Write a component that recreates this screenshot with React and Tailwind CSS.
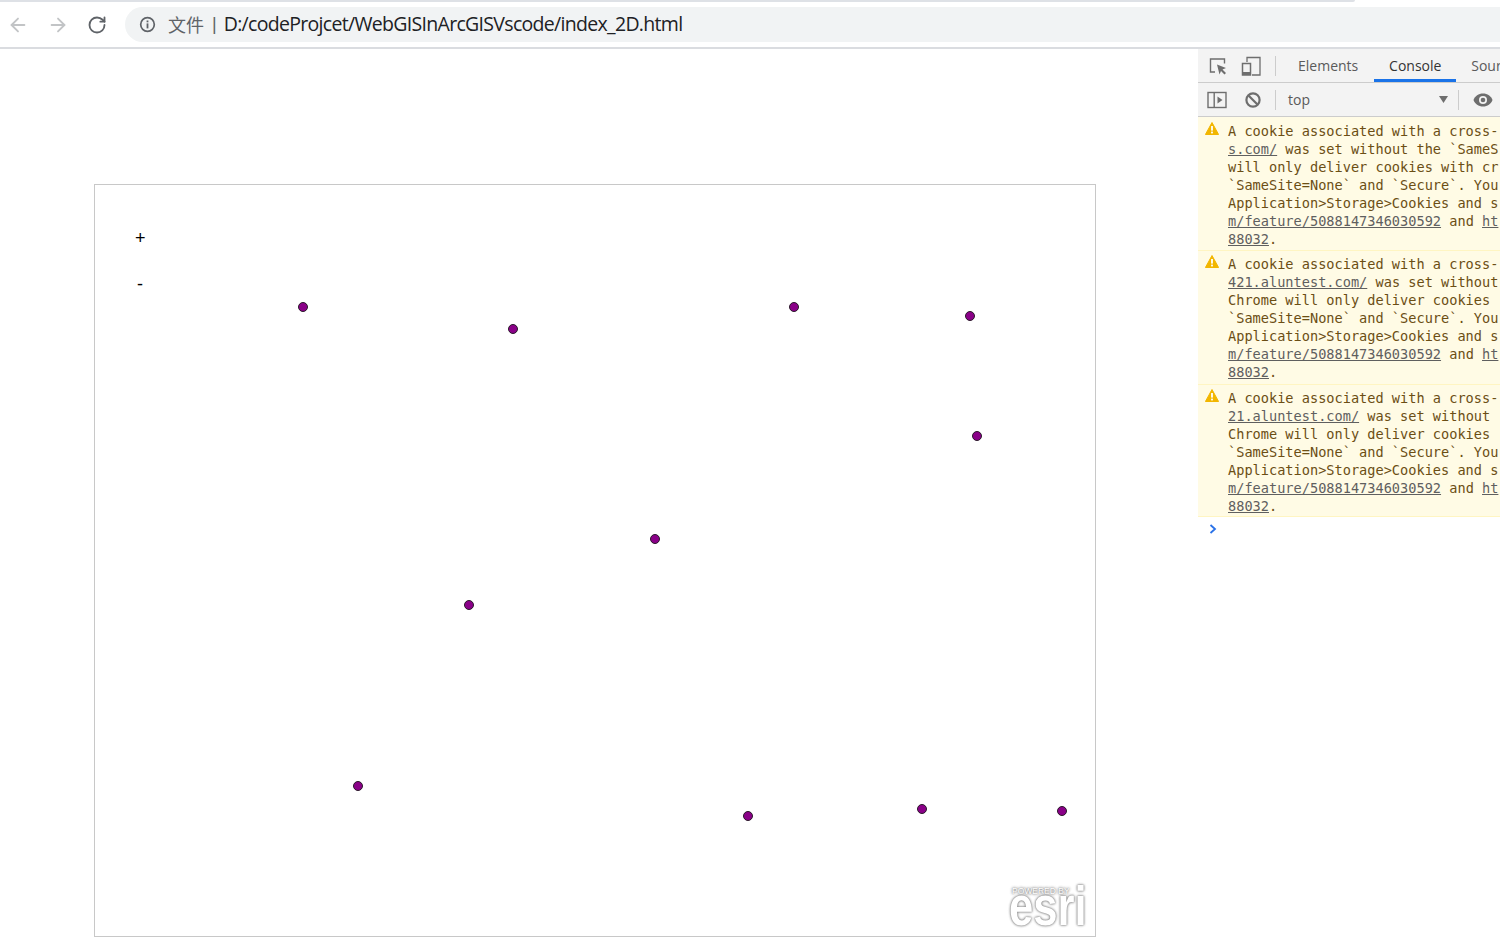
import { ArrowLeft, ArrowRight, RotateCw } from "lucide-react"

const POINTS = [
  [303, 307], [513, 329], [794, 307], [970, 316], [977, 436], [655, 539],
  [469, 605], [358, 786], [748, 816], [922, 809], [1062, 811],
]

const MESSAGES = [
  [
    "A cookie associated with a cross-",
    [<u key="a">s.com/</u>, " was set without the `SameS"],
    "will only deliver cookies with cr",
    "`SameSite=None` and `Secure`. You",
    "Application>Storage>Cookies and s",
    [<u key="a">m/feature/5088147346030592</u>, " and ", <u key="b">ht</u>],
    [<u key="a">88032</u>, "."],
  ],
  [
    "A cookie associated with a cross-",
    [<u key="a">421.aluntest.com/</u>, " was set without"],
    "Chrome will only deliver cookies ",
    "`SameSite=None` and `Secure`. You",
    "Application>Storage>Cookies and s",
    [<u key="a">m/feature/5088147346030592</u>, " and ", <u key="b">ht</u>],
    [<u key="a">88032</u>, "."],
  ],
  [
    "A cookie associated with a cross-",
    [<u key="a">21.aluntest.com/</u>, " was set without"],
    "Chrome will only deliver cookies ",
    "`SameSite=None` and `Secure`. You",
    "Application>Storage>Cookies and s",
    [<u key="a">m/feature/5088147346030592</u>, " and ", <u key="b">ht</u>],
    [<u key="a">88032</u>, "."],
  ],
]

const ROW_PADDING = ["pt-[5px] pb-[2px]", "pt-[4px] pb-[3px]", "pt-[4px] pb-[1px]"]

const WarningIcon = () => (
  <svg width="14" height="13" viewBox="0 0 14 13" className="shrink-0">
    <path d="M7 .5 13.6 12.5H.4Z" fill="#f2b600" stroke="#f2b600" strokeLinejoin="round" />
    <rect x="6.1" y="4" width="1.8" height="4.6" fill="#fff" />
    <rect x="6.1" y="9.6" width="1.8" height="1.8" fill="#fff" />
  </svg>
)

const AddressBar = () => (
  <div className="h-[49px] bg-white border-b-2 border-[#dadce0] flex flex-col">
    <div className="h-[2px] w-[1355px] bg-[#dee1e6] rounded-br-sm" />
    <div className="flex items-center mt-[5px]">
      <div className="w-[125px] flex items-center pl-[7px] gap-[18px]">
        <ArrowLeft size={22} strokeWidth={2} className="text-[#c2c4c6]" />
        <ArrowRight size={22} strokeWidth={2} className="text-[#c2c4c6]" />
        <RotateCw size={20} strokeWidth={2.2} className="text-[#5f6368]" />
      </div>
      <div className="flex-1 h-[35px] bg-[#f1f3f4] rounded-l-full flex items-center pl-[14px]">
        <svg width="17" height="17" viewBox="0 0 17 17" className="shrink-0">
          <circle cx="8.5" cy="8.5" r="6.8" fill="none" stroke="#5f6368" strokeWidth="1.7" />
          <rect x="7.6" y="7.4" width="1.8" height="5" fill="#5f6368" />
          <rect x="7.6" y="4.5" width="1.8" height="1.8" fill="#5f6368" />
        </svg>
        <span className="ml-[12px] text-[18px] text-[#5f6368] font-['Noto_Sans_CJK_SC',sans-serif] -mt-[1px]">文件</span>
        <span className="ml-[8px] text-[18px] text-[#5f6368] font-['Liberation_Sans',sans-serif] -mt-[1px]">|</span>
        <span className="ml-[7px] text-[19.5px] tracking-[-0.69px] text-[#202124] font-['Open_Sans',sans-serif] whitespace-nowrap -mt-[2px]">
          D:/codeProjcet/WebGISInArcGISVscode/index_2D.html
        </span>
      </div>
    </div>
  </div>
)

const MapPanel = () => (
  <div className="relative w-[1002px] h-[753px] border border-[#c8c8c8] bg-white overflow-hidden">
    <span className="absolute left-[40px] top-[43px] text-[18px] leading-5 text-black font-['Liberation_Sans',sans-serif]">+</span>
    <span className="absolute left-[42px] top-[89px] text-[18px] leading-5 text-black font-['Liberation_Sans',sans-serif]">-</span>
    {POINTS.map(([x, y]) => (
      <span
        key={x + "-" + y}
        className="absolute w-[10px] h-[10px] rounded-full bg-[#8a0088] border-[1.5px] border-[#2a1a2a]"
        style={{ left: x - 100, top: y - 190 }}
      />
    ))}
    <div className="absolute right-[8px] bottom-[9px] w-[78px] h-[45px] text-white font-['Liberation_Sans',sans-serif] [text-shadow:0_0_3px_#8a8a8a,0_0_3px_#8a8a8a,0_0_1px_#b0b0b0]">
      <div className="text-[8.5px] leading-[10px] whitespace-nowrap pl-[3px] pt-[4px]">POWERED BY</div>
      <div className="absolute left-0 top-[9px] text-[56px] leading-[30px] font-bold whitespace-nowrap origin-left scale-x-[0.78]">esri</div>
    </div>
  </div>
)

const DevTools = () => (
  <div className="w-[302px] bg-white overflow-hidden">
    <div className="h-[34px] bg-[#f3f3f3] border-b border-[#cccccc] flex items-stretch text-[14px] text-[#5a5a5a] font-['Open_Sans',sans-serif]">
      <div className="w-[77px] flex items-center pl-[11px] gap-[14px] shrink-0">
        <svg width="18" height="18" viewBox="0 0 18 18" fill="none">
          <path d="M6 15H1.5V2H15.5V6.5" stroke="#6e6e6e" strokeWidth="1.4" />
          <path d="M8 7.5 17 11 13.5 12.5 17 16 15.5 17.5 12 14 10.5 17.5Z" fill="#6e6e6e" />
        </svg>
        <svg width="20" height="20" viewBox="0 0 20 20" fill="none">
          <path d="M6 6V1.5H19V19H11" stroke="#6e6e6e" strokeWidth="1.3" />
          <rect x="1.5" y="7.5" width="8" height="11.5" stroke="#6e6e6e" strokeWidth="1.5" />
          <rect x="2" y="16" width="7" height="3" fill="#6e6e6e" />
        </svg>
      </div>
      <div className="w-px h-[20px] bg-[#cccccc] self-center shrink-0" />
      <span className="ml-[22px] self-center whitespace-nowrap">Elements</span>
      <div className="ml-[16px] w-[82px] flex items-center justify-center border-b-[3px] border-[#1a73e8] text-[#333333] shrink-0 pt-[2px]">Console</div>
      <span className="ml-[15px] self-center whitespace-nowrap">Sour</span>
    </div>
    <div className="h-[34px] bg-[#f3f3f3] border-b border-[#cccccc] flex items-center text-[14px] text-[#5a5a5a] font-['Open_Sans',sans-serif]">
      <svg width="20" height="18" viewBox="0 0 20 18" fill="none" className="ml-[9px] shrink-0">
        <rect x="1" y="1.5" width="18" height="15" stroke="#6e6e6e" strokeWidth="1.4" />
        <rect x="6.5" y="1.5" width="1.4" height="15" fill="#6e6e6e" />
        <path d="M10.5 5.5 15.5 9 10.5 12.5Z" fill="#6e6e6e" />
      </svg>
      <svg width="18" height="18" viewBox="0 0 18 18" fill="none" className="ml-[17px] shrink-0">
        <circle cx="9" cy="9" r="6.6" stroke="#6e6e6e" strokeWidth="2.2" />
        <path d="M4.5 4.5 13.5 13.5" stroke="#6e6e6e" strokeWidth="2.2" />
      </svg>
      <div className="ml-[13px] w-px h-[20px] bg-[#cccccc] shrink-0" />
      <span className="ml-[12px] w-[151px] shrink-0">top</span>
      <svg width="9" height="7" viewBox="0 0 9 7" className="shrink-0">
        <path d="M0 0H9L4.5 7Z" fill="#6e6e6e" />
      </svg>
      <div className="ml-[10px] w-px h-[20px] bg-[#cccccc] shrink-0" />
      <svg width="20" height="14" viewBox="0 0 20 14" className="ml-[14px] shrink-0">
        <path d="M10 .5C5.5.5 2 3 .5 7 2 11 5.5 13.5 10 13.5S18 11 19.5 7C18 3 14.5.5 10 .5Z" fill="#6e6e6e" />
        <circle cx="10" cy="7" r="4" fill="#f3f3f3" />
        <circle cx="10" cy="7" r="2.3" fill="#6e6e6e" />
      </svg>
    </div>
    {MESSAGES.map((lines, i) => (
      <div key={i} className={"bg-[#fffbe5] border-b border-[#fff5c2] flex pl-[7px] " + ROW_PADDING[i]}>
        <div className="w-[23px] shrink-0"><WarningIcon /></div>
        <div className="font-['DejaVu_Sans_Mono',monospace] text-[13.62px] leading-[18px] text-[#6b4e14] whitespace-pre">
          {lines.map((line, j) => (
            <div key={j} className="[&_u]:text-[#5f5f5f]">{line}</div>
          ))}
        </div>
      </div>
    ))}
    <svg width="8" height="10" viewBox="0 0 8 10" fill="none" className="ml-[11px] mt-[7px]">
      <path d="M1.5 1 6 5 1.5 9" stroke="#2a72e8" strokeWidth="1.8" />
    </svg>
  </div>
)

const App = () => {
  return (
    <div className="w-[1500px] h-[948px] bg-white overflow-hidden flex flex-col">
      <AddressBar />
      <div className="flex flex-1 min-h-0">
        <div className="w-[1198px] pl-[94px] pt-[135px] shrink-0">
          <MapPanel />
        </div>
        <DevTools />
      </div>
    </div>
  )
}

export default App
